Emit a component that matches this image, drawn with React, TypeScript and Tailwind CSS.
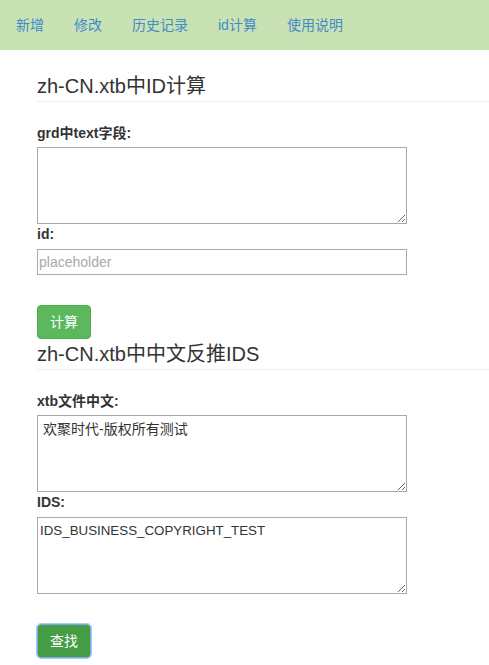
export default function App() {
  const links = ['新增', '修改', '历史记录', 'id计算', '使用说明'];

  return (
    <div className="min-h-screen bg-white font-['Liberation_Sans','Noto_Sans_CJK_SC',sans-serif] text-[#333]">
      <nav className="h-[50px] bg-[#c9e2b3] flex items-center pl-px text-[14px]">
        {links.map((l) => (
          <a key={l} className="px-[15px] text-[#428bca] leading-[20px]">
            {l}
          </a>
        ))}
      </nav>

      <main className="pl-[37px]">
        {/* 第一部分：ID计算 */}
        <h3 className="mt-[21px] text-[20px] leading-[30px] border-b border-[#eee]">zh-CN.xtb中ID计算</h3>
        <label className="block mt-[21px] mb-[4px] text-[14px] leading-[20px] font-bold">grd中text字段:</label>
        <textarea className="block w-[370px] h-[77px] border border-[#a9a9a9] p-[2px] text-[13.33px] leading-[16px] outline-none" />
        <label className="block mb-[5px] text-[14px] leading-[20px] font-bold">id:</label>
        <input
          className="block w-[370px] h-[26px] border border-[#a9a9a9] px-px text-[14px] placeholder:text-[#a9a9a9] outline-none"
          placeholder="placeholder"
        />
        <button className="block mt-[30px] h-[34px] w-[54px] rounded-[4px] border border-[#4cae4c] bg-[#5cb85c] text-white text-[14px] leading-[20px]">
          计算
        </button>

        {/* 第二部分：中文反推IDS */}
        <h3 className="text-[20px] leading-[30px] border-b border-[#eee]">zh-CN.xtb中中文反推IDS</h3>
        <label className="block mt-[21px] mb-[4px] text-[14px] leading-[20px] font-bold">xtb文件中文:</label>
        <textarea
          className="block w-[370px] h-[77px] border border-[#a9a9a9] pt-[4px] pb-[2px] pl-[5px] pr-[2px] text-[14px] leading-[18px] outline-none"
          defaultValue="欢聚时代-版权所有测试"
        />
        <label className="block mb-[5px] text-[14px] leading-[20px] font-bold">IDS:</label>
        <textarea
          className="block w-[370px] h-[77px] border border-[#a9a9a9] pt-[4px] pb-[2px] px-[2px] text-[13.33px] leading-[18px] outline-none"
          defaultValue="IDS_BUSINESS_COPYRIGHT_TEST"
        />
        <button className="block mt-[30px] h-[34px] w-[54px] rounded-[4px] border border-[#7aa9e6] outline outline-1 outline-[#a9c8f2] bg-[#449d44] text-white text-[14px] leading-[20px]">
          查找
        </button>
      </main>
    </div>
  );
}
